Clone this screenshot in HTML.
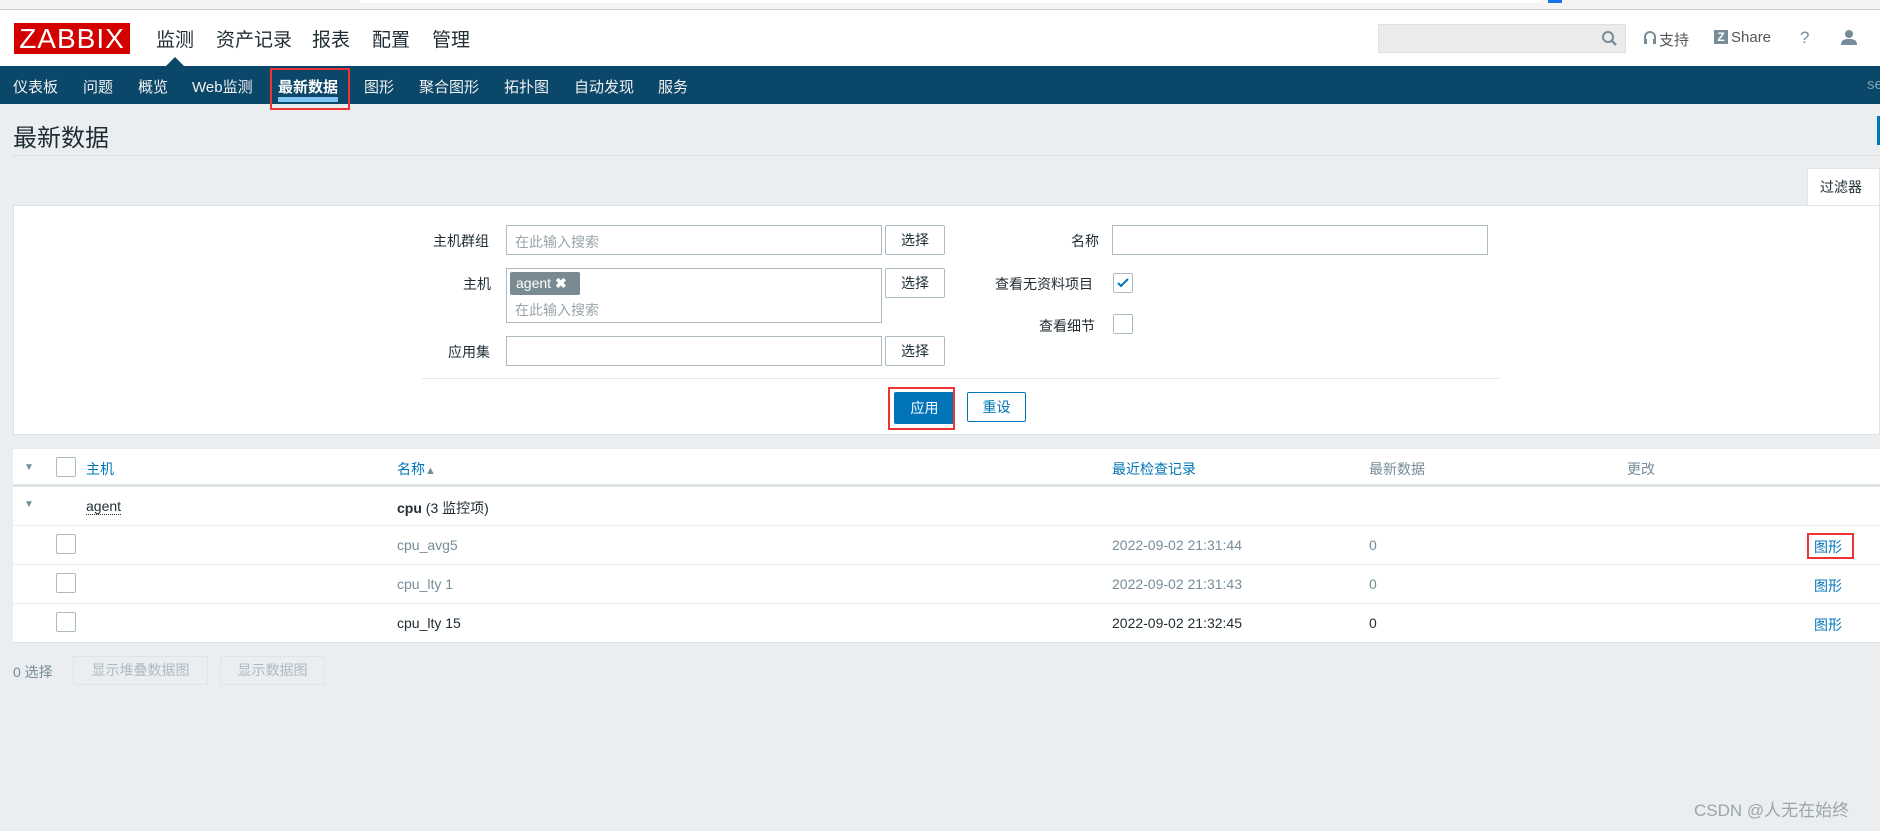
<!DOCTYPE html>
<html><head><meta charset="utf-8"><style>
*{margin:0;padding:0;box-sizing:border-box}
body{width:1880px;height:831px;background:#ebeef0;font-family:"Liberation Sans","Noto Sans CJK SC",sans-serif;font-size:14px;color:#1f2c33;position:relative;overflow:hidden}
.a{position:absolute;white-space:nowrap}
.inp{position:absolute;background:#fff;border:1px solid #acbbc2}
.btn{position:absolute;background:#fff;border:1px solid #acbbc2;border-radius:2px;text-align:center;font-size:14px;color:#1f2c33}
.cb{position:absolute;width:20px;height:20px;border:1px solid #acbbc2;border-radius:2px;background:#fff}
.ph{color:#9aa5ab}
.lnk{color:#0275b8}
.row{position:absolute;left:13px;width:1867px;background:#fff;border-bottom:1px solid #ebeef0}
</style></head><body>
<div class="a" style="left:0;top:0;width:1880px;height:10px;background:#f4f4f4;border-bottom:1px solid #ccc"></div>
<div class="a" style="left:360px;top:0;width:1180px;height:3px;background:#fff"></div>
<div class="a" style="left:1548px;top:0;width:14px;height:3px;background:#1a73e8"></div>
<div class="a" style="left:0;top:10px;width:1880px;height:56px;background:#fff"></div>
<div class="a" style="left:14px;top:23px;width:116px;height:31px;background:#d40000;color:#fff;font-size:28px;line-height:31px;text-align:center;letter-spacing:1px">ZABBIX</div>
<div class="a" style="left:156px;top:25px;font-size:19px;color:#1f2c33">监测</div>
<div class="a" style="left:216px;top:25px;font-size:19px;color:#1f2c33">资产记录</div>
<div class="a" style="left:312px;top:25px;font-size:19px;color:#1f2c33">报表</div>
<div class="a" style="left:372px;top:25px;font-size:19px;color:#1f2c33">配置</div>
<div class="a" style="left:432px;top:25px;font-size:19px;color:#1f2c33">管理</div>
<div class="a" style="left:166px;top:57px;width:0;height:0;border-left:9px solid transparent;border-right:9px solid transparent;border-bottom:9px solid #0b4769"></div>
<div class="a" style="left:1378px;top:24px;width:248px;height:29px;background:#ebebeb;border:1px solid #e0e0e0"></div>
<svg class="a" style="left:1601px;top:30px" width="17" height="17" viewBox="0 0 17 17"><circle cx="7" cy="7" r="5" fill="none" stroke="#768d99" stroke-width="2"/><path d="M10.5 10.5L15 15" stroke="#768d99" stroke-width="2.5"/></svg>
<svg class="a" style="left:1643px;top:30px" width="14" height="16" viewBox="0 0 14 16"><path d="M2 10V7a5 5 0 0110 0v3" fill="none" stroke="#768d99" stroke-width="2"/><rect x="1" y="9" width="3" height="5" fill="#768d99"/><rect x="10" y="9" width="3" height="5" fill="#768d99"/></svg>
<div class="a" style="left:1659px;top:29px;font-size:15px;color:#555">支持</div>
<div class="a" style="left:1714px;top:30px;width:14px;height:14px;background:#768d99;color:#fff;font-size:12px;font-weight:bold;line-height:14px;text-align:center">Z</div>
<div class="a" style="left:1731px;top:29px;font-size:15px;color:#555">Share</div>
<div class="a" style="left:1800px;top:28px;font-size:17px;color:#768d99">?</div>
<svg class="a" style="left:1841px;top:29px" width="16" height="16" viewBox="0 0 16 16"><circle cx="8" cy="5" r="4" fill="#768d99"/><path d="M0 16c0-5 3-6 8-6s8 1 8 6z" fill="#768d99"/></svg>
<div class="a" style="left:0;top:66px;width:1880px;height:38px;background:#0b4769"></div>
<div class="a" style="top:76px;left:0;font-size:15px;color:#f2f2f2;width:1880px;height:20px">
<span class="a" style="left:13px">仪表板</span><span class="a" style="left:83px">问题</span><span class="a" style="left:138px">概览</span><span class="a" style="left:192px">Web监测</span><span class="a" style="left:278px;color:#fff;font-weight:bold">最新数据</span><span class="a" style="left:364px">图形</span><span class="a" style="left:419px">聚合图形</span><span class="a" style="left:504px">拓扑图</span><span class="a" style="left:574px">自动发现</span><span class="a" style="left:658px">服务</span><span class="a" style="left:1867px;color:#7f9fb5">se</span></div>
<div class="a" style="left:278px;top:97px;width:60px;height:5px;background:#7fc6f5"></div>
<div class="a" style="left:270px;top:68px;width:80px;height:42px;border:2px solid #ee3333"></div>
<div class="a" style="left:13px;top:118px;font-size:24px;color:#1f2c33">最新数据</div>
<div class="a" style="left:13px;top:155px;width:1867px;height:1px;background:#dcdfe2"></div>
<div class="a" style="left:1877px;top:116px;width:3px;height:29px;background:#0275b8"></div>
<div class="a" style="left:1807px;top:168px;width:73px;height:38px;background:#fff;border:1px solid #dfe4e7;border-bottom:none;padding:8px 0 0 12px;font-size:14px">过滤器</div>
<div class="a" style="left:13px;top:205px;width:1867px;height:230px;background:#fff;border:1px solid #dfe4e7"></div>
<div class="a" style="left:433px;top:231px;font-size:14px">主机群组</div>
<div class="inp" style="left:506px;top:225px;width:376px;height:30px"><span class="a ph" style="left:8px;top:6px">在此输入搜索</span></div>
<div class="btn" style="left:885px;top:225px;width:60px;height:30px;line-height:28px">选择</div>
<div class="a" style="left:463px;top:274px">主机</div>
<div class="inp" style="left:506px;top:268px;width:376px;height:55px"><span class="a" style="left:3px;top:3px;height:23px;width:70px;background:#7a8a93;color:#fff;border-radius:2px;padding:3px 6px;font-size:14px">agent <b>✖</b></span><span class="a ph" style="left:8px;top:31px">在此输入搜索</span></div>
<div class="btn" style="left:885px;top:268px;width:60px;height:30px;line-height:28px">选择</div>
<div class="a" style="left:448px;top:342px">应用集</div>
<div class="inp" style="left:506px;top:336px;width:376px;height:30px"></div>
<div class="btn" style="left:885px;top:336px;width:60px;height:30px;line-height:28px">选择</div>
<div class="a" style="left:1071px;top:231px">名称</div>
<div class="inp" style="left:1112px;top:225px;width:376px;height:30px"></div>
<div class="a" style="left:995px;top:274px">查看无资料项目</div>
<div class="cb" style="left:1113px;top:273px"><svg width="18" height="18" viewBox="0 0 18 18"><path d="M4 9l3 3 7-7" fill="none" stroke="#0275b8" stroke-width="2"/></svg></div>
<div class="a" style="left:1039px;top:316px">查看细节</div>
<div class="cb" style="left:1113px;top:314px"></div>
<div class="a" style="left:422px;top:378px;width:1078px;height:1px;background:#e6e9eb"></div>
<div class="a" style="left:894px;top:392px;width:61px;height:32px;background:#0275b8;border-radius:2px;color:#fff;text-align:center;line-height:32px">应用</div>
<div class="a" style="left:888px;top:387px;width:67px;height:43px;border:2px solid #ee3333"></div>
<div class="btn" style="left:967px;top:392px;width:59px;height:30px;line-height:28px;border-color:#0275b8;color:#0275b8">重设</div>
<div class="row" style="top:449px;height:38px;border-bottom:3px solid #dfe4e7"></div>
<div class="a" style="left:24px;top:462px;font-size:10px;color:#768d99">▼</div>
<div class="cb" style="left:56px;top:457px"></div>
<div class="a lnk" style="left:86px;top:459px">主机</div>
<div class="a lnk" style="left:397px;top:459px">名称<span style="color:#768d99;font-size:11px">▲</span></div>
<div class="a lnk" style="left:1112px;top:459px">最近检查记录</div>
<div class="a" style="left:1369px;top:459px;color:#768d99">最新数据</div>
<div class="a" style="left:1627px;top:459px;color:#768d99">更改</div>
<div class="row" style="top:487px;height:39px"></div>
<div class="a" style="left:24px;top:499px;font-size:10px;color:#768d99">▼</div>
<div class="a" style="left:86px;top:498px;border-bottom:1px dotted #1f2c33">agent</div>
<div class="a" style="left:397px;top:498px"><b>cpu</b> (3 监控项)</div>
<div class="row" style="top:526px;height:39px"></div>
<div class="cb" style="left:56px;top:534px"></div>
<div class="a" style="left:397px;top:537px;color:#768d99">cpu_avg5</div>
<div class="a" style="left:1112px;top:537px;color:#768d99">2022-09-02 21:31:44</div>
<div class="a" style="left:1369px;top:537px;color:#768d99">0</div>
<div class="a lnk" style="left:1814px;top:537px">图形</div>
<div class="a" style="left:1807px;top:533px;width:47px;height:26px;border:2px solid #ee3333"></div>
<div class="row" style="top:565px;height:39px"></div>
<div class="cb" style="left:56px;top:573px"></div>
<div class="a" style="left:397px;top:576px;color:#768d99">cpu_lty 1</div>
<div class="a" style="left:1112px;top:576px;color:#768d99">2022-09-02 21:31:43</div>
<div class="a" style="left:1369px;top:576px;color:#768d99">0</div>
<div class="a lnk" style="left:1814px;top:576px">图形</div>
<div class="row" style="top:604px;height:39px;border-bottom:1px solid #dfe4e7"></div>
<div class="cb" style="left:56px;top:612px"></div>
<div class="a" style="left:397px;top:615px">cpu_lty 15</div>
<div class="a" style="left:1112px;top:615px">2022-09-02 21:32:45</div>
<div class="a" style="left:1369px;top:615px">0</div>
<div class="a lnk" style="left:1814px;top:615px">图形</div>
<div class="a" style="left:13px;top:662px;color:#768d99">0 选择</div>
<div class="btn" style="left:73px;top:656px;width:135px;height:29px;line-height:27px;background:#ebeef0;color:#acbbc2;border-color:#dfe4e7">显示堆叠数据图</div>
<div class="btn" style="left:220px;top:656px;width:105px;height:29px;line-height:27px;background:#ebeef0;color:#acbbc2;border-color:#dfe4e7">显示数据图</div>
<div class="a" style="left:1694px;top:796px;font-size:17px;color:#9aa5ab">CSDN @人无在始终</div>
</body></html>
